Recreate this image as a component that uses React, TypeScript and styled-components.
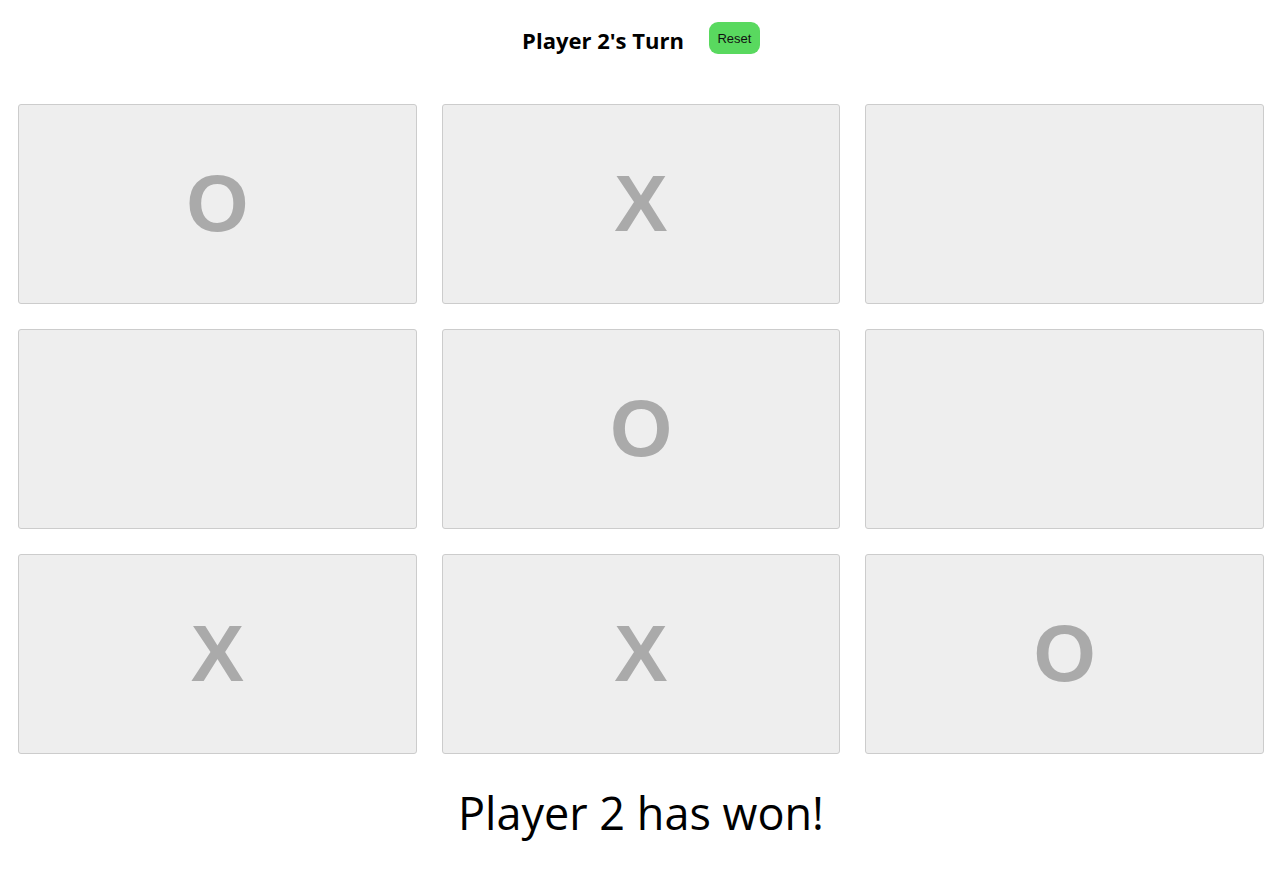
import { useState } from "react";
import styled, { createGlobalStyle } from "styled-components";

const GlobalStyle = createGlobalStyle`
  html, body {
    margin: 0;
    padding: 0;
    background: #fff;
    font-family: "Open Sans", "Noto Sans", sans-serif;
  }
`;

const Page = styled.div`
  padding: 0 15px 0 18px;
`;

const Header = styled.div`
  height: 104px;
  display: flex;
  align-items: center;
  justify-content: center;
  gap: 25px;
  padding-bottom: 28px;
  box-sizing: border-box;
`;

const Title = styled.h2`
  margin: 0;
  font-size: 22px;
  font-weight: 700;
  color: #000;
  transform: translateY(2px);
`;

const ResetButton = styled.button`
  width: 51px;
  height: 32px;
  border: none;
  border-radius: 9px;
  background: #59d95f;
  color: #111;
  font-family: "Liberation Sans", Arial, sans-serif;
  font-size: 13px;
  padding: 0;
  cursor: pointer;
`;

const Board = styled.div`
  display: grid;
  grid-template-columns: repeat(3, 1fr);
  grid-auto-rows: 200px;
  column-gap: 25px;
  row-gap: 25px;
`;

const Cell = styled.div`
  background: #eeeeee;
  border: 1px solid #cccccc;
  border-radius: 3px;
  display: flex;
  align-items: center;
  justify-content: center;
  font-family: "Liberation Sans", Arial, sans-serif;
  font-weight: 700;
  font-size: 80px;
  line-height: 1;
  color: #aaaaaa;
  cursor: pointer;
`;

const Result = styled.div`
  text-align: center;
  font-size: 45px;
  color: #000;
  margin-top: 28px;
`;

export default function App() {
  const [cells] = useState<string[]>(["O", "X", "", "", "O", "", "X", "X", "O"]);

  return (
    <Page>
      <GlobalStyle />
      <Header>
        <Title>Player 2's Turn</Title>
        <ResetButton>Reset</ResetButton>
      </Header>
      <Board>
        {cells.map((c, i) => (
          <Cell key={i}>{c}</Cell>
        ))}
      </Board>
      <Result>Player 2 has won!</Result>
    </Page>
  );
}
